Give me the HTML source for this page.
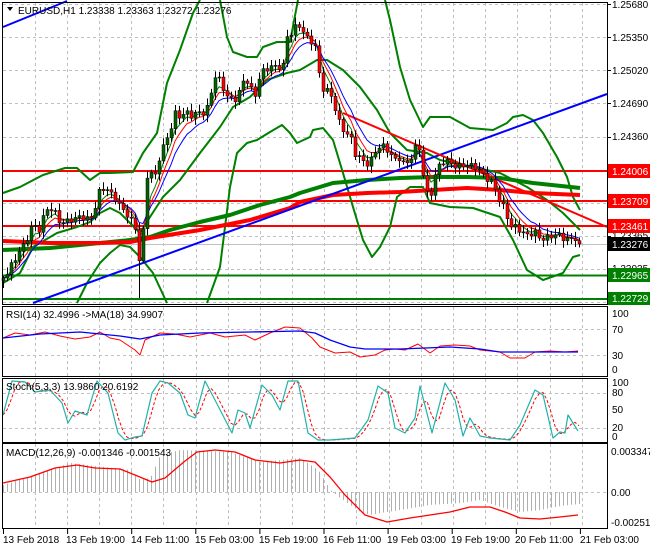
<!DOCTYPE html>
<html><head><meta charset="utf-8"><style>
html,body{margin:0;padding:0;background:#fff;width:650px;height:550px;overflow:hidden}
svg{display:block}
text{font-family:"Liberation Sans",sans-serif;font-size:10px;fill:#000}
</style></head><body>
<svg id="s" width="650" height="550" viewBox="0 0 650 550" xmlns="http://www.w3.org/2000/svg">
<rect x="0" y="0" width="650" height="550" fill="#fff"/>
<g id="grid" stroke="#c0c0c0" stroke-dasharray="3,3" stroke-width="1"></g>
<g id="main"></g>
<g id="sub"></g>
<g fill="none" stroke="#000" stroke-width="1">
<rect x="2.5" y="2.5" width="605" height="302"/>
<rect x="2.5" y="306.5" width="605" height="70"/>
<rect x="2.5" y="378.5" width="605" height="64"/>
<rect x="2.5" y="443.5" width="605" height="85"/>
</g>
<g id="ticks" stroke="#000"></g>
<g>
<text x="612" y="8">1.25680</text>
<text x="612" y="41">1.25350</text>
<text x="612" y="74">1.25020</text>
<text x="612" y="107">1.24690</text>
<text x="612" y="140">1.24360</text>
<text x="612" y="239">1.23365</text>
<text x="612" y="272">1.23035</text>
<rect x="608" y="164" width="42" height="14" fill="#ff0000"/><text x="612" y="175" style="fill:#fff">1.24006</text>
<rect x="608" y="194" width="42" height="14" fill="#ff0000"/><text x="612" y="205" style="fill:#fff">1.23709</text>
<rect x="608" y="219" width="42" height="14" fill="#ff0000"/><text x="612" y="230" style="fill:#fff">1.23461</text>
<rect x="608" y="237" width="42" height="14" fill="#000"/><text x="612" y="248" style="fill:#fff">1.23276</text>
<rect x="608" y="268" width="42" height="14" fill="#008000"/><text x="612" y="279" style="fill:#fff">1.22965</text>
<rect x="608" y="292" width="42" height="13" fill="#008000"/><text x="612" y="302" style="fill:#fff">1.22729</text>
<text x="612" y="317">100</text>
<text x="612" y="333">70</text>
<text x="612" y="359">30</text>
<text x="612" y="373">0</text>
<text x="612" y="386">100</text>
<text x="612" y="396">80</text>
<text x="612" y="413">50</text>
<text x="612" y="431">20</text>
<text x="612" y="440">0</text>
<text x="611" y="455">0.003347</text>
<text x="611" y="496">0.00</text>
<text x="611" y="526">-0.002513</text>
</g>
<g>
<text x="3" y="543">13 Feb 2018</text>
<text x="66" y="543">13 Feb 19:00</text>
<text x="131" y="543">14 Feb 11:00</text>
<text x="195" y="543">15 Feb 03:00</text>
<text x="259" y="543">15 Feb 19:00</text>
<text x="323" y="543">16 Feb 11:00</text>
<text x="387" y="543">19 Feb 03:00</text>
<text x="451" y="543">19 Feb 19:00</text>
<text x="515" y="543">20 Feb 11:00</text>
<text x="580" y="543">21 Feb 03:00</text>
</g>
<path d="M7 7 L13 7 L10 11 Z" fill="#000"/>
<text x="18" y="14">EURUSD,H1  1.23338 1.23363 1.23272 1.23276</text>
<text x="6" y="318">RSI(14) 32.4996  -&gt;MA(18) 34.9907</text>
<text x="6" y="390">Stoch(5,3,3) 13.9860 20.6192</text>
<text x="6" y="456">MACD(12,26,9) -0.001346 -0.001543</text>
</svg>
<script>
(function(){
var NS="http://www.w3.org/2000/svg";
function el(p,t,a){var e=document.createElementNS(NS,t);for(var k in a)e.setAttribute(k,a[k]);document.getElementById(p).appendChild(e);return e;}
function pl(p,pts,col,w,extra){var a={points:pts.map(function(q){return q[0]+","+q[1]}).join(" "),fill:"none",stroke:col,"stroke-width":w,"stroke-linejoin":"round"};if(extra)for(var k in extra)a[k]=extra[k];return el(p,"polyline",a);}
function interp(pts,x){for(var i=0;i<pts.length-1;i++){if(x<=pts[i+1][0]){var a=pts[i],b=pts[i+1];var t=(x-a[0])/(b[0]-a[0]);return a[1]+(b[1]-a[1])*t;}}return pts[pts.length-1][1];}
var vx=[];for(var x=34.5;x<606;x+=32.2)vx.push(Math.round(x)+0.5);
[[3,304],[307,376],[379,442],[444,528]].forEach(function(r){vx.forEach(function(x){el("grid","line",{x1:x,y1:r[0],x2:x,y2:r[1]});});});
[4,37,70,103,137,170,203,236,269,302].forEach(function(y){el("grid","line",{x1:3,y1:y+.5,x2:607,y2:y+.5});});
[329,355,393,428,492].forEach(function(y){el("grid","line",{x1:3,y1:y+.5,x2:607,y2:y+.5});});
for(var i=0;i<10;i++){var tx=3.5+i*64.1;el("ticks","line",{x1:tx,y1:529,x2:tx,y2:534});}
[4,37,70,103,137,170,203,236,269,302].forEach(function(y){el("ticks","line",{x1:607,y1:y+.5,x2:611,y2:y+.5});});
el("main","line",{x1:3,y1:244.5,x2:607,y2:244.5,stroke:"#c0c0c0","stroke-width":1});
[171,201,226].forEach(function(y){el("main","line",{x1:3,y1:y,x2:607,y2:y,stroke:"#ff0000","stroke-width":2});});
[275.5,299].forEach(function(y){el("main","line",{x1:3,y1:y,x2:607,y2:y,stroke:"#008000","stroke-width":2});});
var G="#008000";
pl("main",[[3,193],[20,187],[43,175],[65,168],[77,168],[90,180],[100,173],[110,173],[133,172],[143,153],[157,133],[167,83],[180,50],[193,13],[200,0]],G,2);
pl("main",[[3,283],[20,273],[33,247],[57,233],[77,227],[90,222],[100,213],[110,208],[120,213],[130,223],[140,233],[150,217],[163,197],[180,180],[200,153],[220,127],[233,107],[250,97],[267,80],[287,73],[300,70],[317,60],[327,60],[343,70],[360,87],[377,110],[390,133],[407,150],[427,153],[440,160],[473,167],[500,173],[527,187],[547,200],[563,213],[580,230]],G,2);
pl("main",[[220,0],[227,37],[233,52],[247,57],[257,57],[263,47],[277,42],[290,42],[298,0]],G,2);
pl("main",[[77,303],[87,283],[100,263],[110,253],[120,245],[130,247],[140,257],[153,273],[167,303]],G,2);
pl("main",[[207,303],[220,267],[230,187],[237,153],[247,143],[257,140],[270,132],[282,125],[290,133],[297,143],[310,137],[313,130],[323,128],[333,140],[343,173],[353,207],[363,240],[372,257],[380,247],[390,227],[397,197],[410,187],[423,187],[430,203],[450,207],[473,208],[500,217],[513,240],[527,270],[543,280],[563,273],[573,257],[580,255]],G,2);
pl("main",[[385,0],[390,20],[400,67],[410,100],[423,127],[430,117],[450,117],[470,128],[493,130],[507,123],[513,117],[523,115],[533,120],[543,133],[557,157],[567,177],[573,197],[580,210]],G,2);
pl("main",[[3,250],[50,248],[100,243],[130,240],[150,237],[170,230],[200,222],[230,215],[260,205],[290,197],[300,193],[333,183],[367,180],[400,178],[433,177],[467,177],[500,178],[533,183],[580,188]],G,4);
pl("main",[[3,241],[50,243],[100,243],[130,242],[150,238],[200,230],[250,220],[290,208],[300,202],[333,195],[367,193],[400,192],[433,190],[467,188],[500,190],[533,193],[580,195]],"#ff0000",4);
el("main","line",{x1:3,y1:27,x2:67,y2:1,stroke:"#0000ff","stroke-width":2});
el("main","line",{x1:33,y1:303,x2:607,y2:94,stroke:"#0000ff","stroke-width":2});
el("main","line",{x1:343,y1:113,x2:607,y2:227,stroke:"#ff0000","stroke-width":2});
var P=[[3,278],[10,265],[15,258],[20,250],[25,247],[30,228],[35,225],[40,228],[45,210],[50,210],[55,215],[60,222],[65,220],[70,218],[75,220],[80,218],[85,220],[90,218],[95,205],[100,188],[105,190],[110,195],[115,198],[120,205],[125,210],[130,220],[135,230],[138,265],[142,250],[146,175],[150,170],[155,175],[160,155],[165,145],[170,130],[175,112],[180,115],[185,112],[190,118],[195,115],[200,112],[205,110],[210,100],[213,75],[218,80],[222,88],[226,95],[230,98],[235,97],[240,90],[245,78],[250,90],[255,95],[258,78],[262,70],[267,68],[272,67],[276,70],[283,65],[287,35],[292,30],[297,25],[302,30],[305,40],[310,40],[315,45],[318,60],[320,85],[325,90],[330,95],[335,110],[340,125],[345,130],[350,135],[355,155],[360,160],[365,165],[370,160],[375,150],[380,145],[385,150],[390,155],[395,160],[400,155],[405,165],[410,160],[415,150],[420,150],[425,190],[430,195],[435,175],[440,165],[445,162],[450,163],[460,165],[465,165],[470,168],[475,168],[480,170],[485,175],[490,180],[495,190],[500,205],[505,210],[510,225],[515,225],[520,230],[525,238],[530,235],[535,232],[540,236],[545,238],[550,237],[555,237],[560,236],[565,238],[570,237],[575,238],[580,244]];
var closes=[],xs=[];
for(var i=0;i<=144;i++){var x=3+i*4;xs.push(x);var c=interp(P,x)+Math.sin(i*2.3)*3+Math.sin(i*0.9)*2;if(i==144)c=244;closes.push(c);}
function ema(arr,n){var k=2/(n+1),o=[],v=arr[0];arr.forEach(function(a){v=a*k+v*(1-k);o.push(v)});return o;}
[[ema(closes,4),"#008000"],[ema(closes,6),"#ff0000"],[ema(closes,9),"#0000ff"]].forEach(function(m,j){pl("main",m[0].map(function(v,i){return [xs[i],v]}),m[1],1);});
for(var i=0;i<=144;i++){var c=closes[i],o=i?closes[i-1]:c+3;var bt=Math.min(o,c),bb=Math.max(o,c);var hi=bt-2-Math.abs(Math.sin(i*1.7))*5,lo=bb+2+Math.abs(Math.cos(i*1.3))*5;if(i==34)lo=298;
el("main","line",{x1:xs[i]+.5,y1:hi,x2:xs[i]+.5,y2:lo,stroke:"#000","stroke-width":1});
var bull=c<o;el("main","rect",{x:xs[i]-1,y:bt,width:3,height:Math.max(1,bb-bt),fill:bull?"#006400":"#ff0000",stroke:"#000","stroke-width":0.5});}
pl("sub",[[3,338],[15,333],[30,335],[45,332],[60,336],[75,339],[90,337],[100,332],[110,338],[120,340],[135,350],[140,355],[145,340],[160,333],[175,334],[190,337],[210,333],[225,337],[245,335],[255,340],[270,333],[285,327],[300,328],[312,338],[320,347],[335,353],[350,352],[360,357],[375,355],[385,350],[395,349],[405,350],[418,344],[430,353],[440,346],[455,345],[470,346],[480,350],[500,352],[510,358],[525,358],[535,352],[550,351],[565,352],[578,351]],"#ff0000",1);
pl("sub",[[3,338],[40,334],[80,332],[120,336],[140,339],[160,335],[200,333],[250,332],[300,331],[315,333],[330,340],[350,347],[365,349],[400,349],[450,347],[480,349],[500,352],[520,352],[578,352]],"#0000ff",1.3);
var S=[[3,415],[12,381],[25,382],[35,392],[50,390],[62,403],[68,423],[75,411],[87,415],[97,381],[108,393],[118,433],[125,440],[135,437],[142,436],[152,393],[160,381],[168,383],[180,393],[188,415],[195,418],[205,381],[215,400],[232,433],[238,410],[245,413],[250,428],[262,385],[272,395],[280,410],[288,381],[298,381],[308,433],[318,440],[330,440],[355,438],[368,420],[378,386],[388,393],[395,428],[405,433],[415,418],[420,386],[432,433],[445,383],[455,400],[463,436],[470,418],[480,436],[490,438],[510,440],[520,425],[535,390],[543,395],[553,438],[560,432],[565,433],[568,415],[578,431]];
var sv=xs.map(function(x){return interp(S,x)});var sd=[];for(var i=0;i<sv.length;i++){var a=sv[Math.max(0,i-2)],b=sv[Math.max(0,i-1)];sd.push((sv[i]+a+b)/3);}
pl("sub",xs.map(function(x,i){return [x,sd[i]]}),"#ff0000",1,{"stroke-dasharray":"3,2"});
pl("sub",S,"#20b2aa",1.2);
var H=[[3,485],[70,463],[130,470],[140,480],[150,478],[160,455],[180,450],[230,452],[260,462],[300,458],[318,470],[330,490],[340,498],[360,512],[370,515],[380,513],[400,510],[430,505],[460,503],[480,500],[500,507],[520,512],[540,510],[560,506],[578,504]];
xs.forEach(function(x){var y=interp(H,x);el("sub","line",{x1:x+.5,y1:492,x2:x+.5,y2:y,stroke:"#b0b0b0","stroke-width":1});});
pl("sub",[[3,483],[30,477],[55,468],[77,465],[95,468],[120,469],[135,475],[152,482],[165,478],[185,461],[197,452],[215,450],[235,452],[255,460],[280,463],[300,460],[315,462],[330,477],[345,495],[365,515],[387,522],[410,518],[430,515],[450,512],[470,507],[490,507],[505,512],[520,518],[540,519],[560,517],[578,515]],"#ff0000",1.3);
})();
</script>
</body></html>
